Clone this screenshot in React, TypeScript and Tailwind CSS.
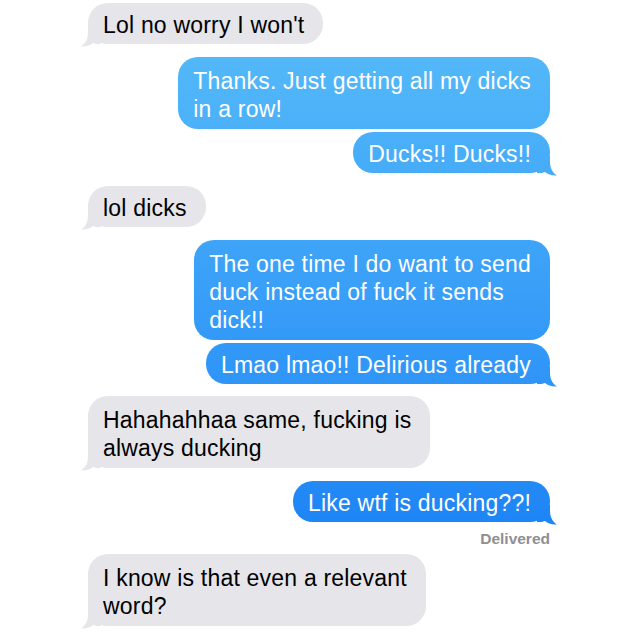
import React from 'react'

type Msg = {
  from: 'me' | 'them'
  lines: string[]
  tail?: boolean
  mt: string
}

const messages: Msg[] = [
  { from: 'them', lines: ["Lol no worry I won't"], tail: true, mt: 'mt-[3px]' },
  { from: 'me', lines: ['Thanks. Just getting all my dicks', 'in a row!'], mt: 'mt-[13px]' },
  { from: 'me', lines: ['Ducks!! Ducks!!'], tail: true, mt: 'mt-[3px]' },
  { from: 'them', lines: ['lol dicks'], tail: true, mt: 'mt-[13px]' },
  {
    from: 'me',
    lines: ['The one time I do want to send', 'duck instead of fuck it sends', 'dick!!'],
    mt: 'mt-[13px]',
  },
  { from: 'me', lines: ['Lmao lmao!! Delirious already'], tail: true, mt: 'mt-[3px]' },
  { from: 'them', lines: ['Hahahahhaa same, fucking is', 'always ducking'], tail: true, mt: 'mt-[12px]' },
  { from: 'me', lines: ['Like wtf is ducking??!'], tail: true, mt: 'mt-[13px]' },
]

const last: Msg = {
  from: 'them',
  lines: ['I know is that even a relevant', 'word?'],
  tail: true,
  mt: 'mt-px',
}

// blue is tied to the viewport so each bubble picks up its slice of the gradient
const blue = 'bg-fixed bg-linear-to-b from-[#59bef9] to-[#0f77f4]'

const Bubble = ({ msg }: { msg: Msg }) => {
  const mine = msg.from === 'me'
  const single = msg.lines.length === 1

  return (
    <div className={`flex ${mine ? 'justify-end' : 'justify-start'} ${msg.mt}`}>
      <div
        className={`relative w-fit rounded-[20px] pl-[15px] pr-[19px] leading-[28px] text-[23px] tracking-[0.2px] ${
          single ? 'pt-[8px] pb-[5px]' : 'pt-[10px] pb-[6px]'
        } ${mine ? `${blue} text-white` : 'bg-[#e5e5ea] text-black'}`}
      >
        {msg.lines.map((line, i) => (
          <React.Fragment key={i}>
            {i > 0 && <br />}
            {line}
          </React.Fragment>
        ))}
        {msg.tail && (
          <span
            className={`absolute bottom-[-3px] h-[20px] w-[20px] [clip-path:path('M0,0H13V5C13,12,15,16,20,19.5C15,20,11,18.5,8,16C6,17,3,17,0,17Z')] ${
              mine ? `right-[-7px] ${blue}` : 'left-[-7px] -scale-x-100 bg-[#e5e5ea]'
            }`}
          />
        )}
      </div>
    </div>
  )
}

export default function App() {
  return (
    <div className="h-[640px] w-[640px] overflow-hidden bg-white pl-[88px] pr-[90px] font-['Liberation_Sans',Arial,sans-serif]">
      {messages.map((m, i) => (
        <Bubble key={i} msg={m} />
      ))}
      <div className="h-[31px] pt-px text-right text-[15.5px] font-bold leading-[31px] text-[#8e8e93]">Delivered</div>
      <Bubble msg={last} />
    </div>
  )
}
